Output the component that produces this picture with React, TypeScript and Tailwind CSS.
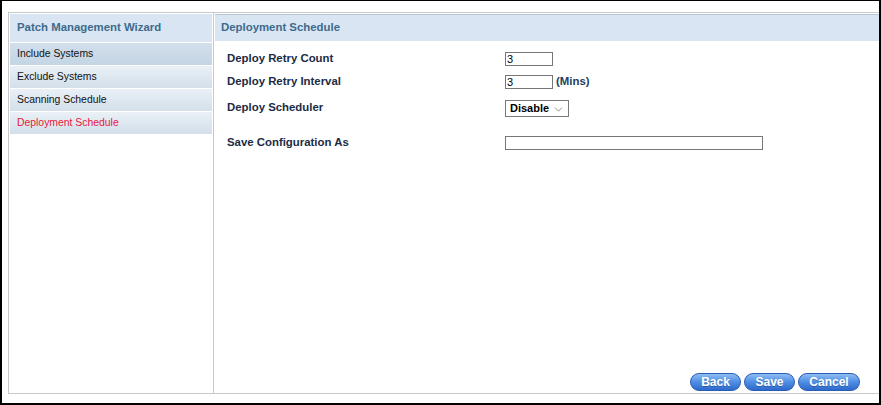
import { ChevronDown } from "lucide-react";

const steps = [
  { name: "Include Systems", state: "hover" },
  { name: "Exclude Systems", state: "idle" },
  { name: "Scanning Schedule", state: "idle" },
  { name: "Deployment Schedule", state: "current" },
];

function WizardButton({ label, width }: { label: string; width: string }) {
  return (
    <button
      className={`${width} h-[18px] rounded-full border border-[#2a5cb3] bg-gradient-to-b from-[#8dbdf3] via-[#4f8ee3] to-[#2d6acb] text-[12px] font-bold leading-none text-white [text-shadow:0_1px_0_rgba(0,0,0,0.25)]`}
    >
      {label}
    </button>
  );
}

export default function App() {
  return (
    <div className="h-[405px] w-[881px] overflow-hidden bg-white font-['Liberation_Sans',Arial,sans-serif]">
      <div className="h-full border-t border-r-2 border-b-2 border-l-2 border-black pt-[11px] pl-[6px]">
        <div className="flex h-[382px] border-t border-b border-l border-[#c9c9c9]">
          {/* Wizard steps */}
          <div className="flex w-[205px] shrink-0 flex-col gap-[1px] border-r border-[#c9c9c9] px-[1px] pt-[1px]">
            <div className="flex h-[28px] items-center bg-[#d9e5f3] pl-[7px] text-[11.4px] font-bold text-[#3d6b8c]">
              Patch Management Wizard
            </div>
            {steps.map((step) => (
              <div
                key={step.name}
                className={`flex h-[22px] items-center pl-[7px] text-[10.4px] ${
                  step.state === "hover"
                    ? "bg-gradient-to-b from-[#d2dfeb] to-[#c4d5e4] text-[#111]"
                    : "bg-gradient-to-b from-[#eaf0f6] to-[#d3dfea] text-[#111]"
                } ${step.state === "current" ? "text-[#e8173c]" : ""}`}
              >
                {step.name}
              </div>
            ))}
          </div>

          {/* Step content */}
          <div className="flex flex-1 flex-col pt-[1px] pl-[1px]">
            <div className="flex h-[27px] items-center border-t border-[#b7c5d6] bg-[#d9e5f3] pl-[6px] text-[11.4px] font-bold text-[#3d6b8c]">
              Deployment Schedule
            </div>

            <div className="flex flex-col pt-[7px] pl-[12px] text-[11.4px] font-bold text-[#1c2b44]">
              <div className="flex h-[22px] items-center">
                <span className="w-[278px]">Deploy Retry Count</span>
                <input
                  defaultValue="3"
                  className="h-[14px] w-[48px] border border-[#767676] px-[1px] text-[11px] font-normal text-black outline-none"
                />
              </div>
              <div className="flex h-[24px] items-center">
                <span className="w-[278px]">Deploy Retry Interval</span>
                <input
                  defaultValue="3"
                  className="h-[14px] w-[48px] border border-[#767676] px-[1px] text-[11px] font-normal text-black outline-none"
                />
                <span className="ml-[3px] text-[#23405f]">(Mins)</span>
              </div>
              <div className="flex h-[28px] items-center">
                <span className="w-[278px]">Deploy Scheduler</span>
                <div className="flex h-[17px] w-[64px] items-center justify-between border border-[#7a7a7a] pr-[3px] pl-[4px] text-[11px] text-black">
                  <span>Disable</span>
                  <ChevronDown size={13} strokeWidth={1.2} className="mt-[3px] text-[#555]" />
                </div>
              </div>
              <div className="mt-[10px] flex h-[22px] items-center">
                <span className="w-[278px]">Save Configuration As</span>
                <input className="h-[14px] w-[258px] border border-[#767676] outline-none" />
              </div>
            </div>

            <div className="mt-auto flex justify-end gap-[3px] pr-[19px] pb-[2px]">
              <WizardButton label="Back" width="w-[51px]" />
              <WizardButton label="Save" width="w-[51px]" />
              <WizardButton label="Cancel" width="w-[62px]" />
            </div>
          </div>
        </div>
      </div>
    </div>
  );
}
